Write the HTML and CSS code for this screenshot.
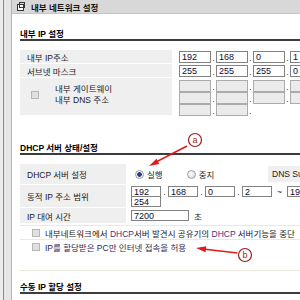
FILE: index.html
```html
<!DOCTYPE html>
<html lang="ko">
<head>
    <title>내부 네트워크 설정</title>
    <meta charset="utf-8">
    <link rel="stylesheet" href="styles.css">
</head>
<body>
    <div class="frame"><div class="frame-edge"></div></div>

    <div class="main">
        <div class="titlebar">
            <svg class="title-icon" width="8" height="9" viewBox="0 0 8 9">
                <rect x="0.5" y="2.5" width="6" height="6" fill="#fff" stroke="#333"/>
                <rect x="2.5" y="0.5" width="5" height="5" fill="none" stroke="#333"/>
            </svg>
            <span>내부 네트워크 설정</span>
        </div>

        <div class="content">
            <h2 class="section-title first">내부 IP 설정</h2>
            <div class="form-table lan-table">
                <div class="label">내부 IP주소</div>
                <div class="value">
                    <div class="ip-line">
                        <input class="octet" type="text" value="192"><span class="dot">.</span>
                        <input class="octet" type="text" value="168"><span class="dot">.</span>
                        <input class="octet" type="text" value="0"><span class="dot">.</span>
                        <input class="octet" type="text" value="1">
                    </div>
                </div>

                <div class="label">서브넷 마스크</div>
                <div class="value">
                    <div class="ip-line">
                        <input class="octet" type="text" value="255"><span class="dot">.</span>
                        <input class="octet" type="text" value="255"><span class="dot">.</span>
                        <input class="octet" type="text" value="255"><span class="dot">.</span>
                        <input class="octet" type="text" value="0">
                    </div>
                </div>

                <div class="label check-label">
                    <input class="chk" type="checkbox">
                    <span>내부 게이트웨이<br>내부 DNS 주소</span>
                </div>
                <div class="value stacked">
                    <div class="ip-line">
                        <input class="octet" type="text" disabled><span class="dot">.</span>
                        <input class="octet" type="text" disabled><span class="dot">.</span>
                        <input class="octet" type="text" disabled><span class="dot">.</span>
                        <input class="octet" type="text" disabled>
                    </div>
                    <div class="ip-line">
                        <input class="octet" type="text" disabled><span class="dot">.</span>
                        <input class="octet" type="text" disabled><span class="dot">.</span>
                        <input class="octet" type="text" disabled><span class="dot">.</span>
                        <input class="octet" type="text" disabled>
                    </div>
                    <div class="ip-line">
                        <input class="octet" type="text" disabled><span class="dot">.</span>
                        <input class="octet" type="text" disabled><span class="dot">.</span>
                    </div>
                </div>
            </div>

            <h2 class="section-title second">DHCP 서버 상태/설정</h2>
            <div class="form-table dhcp-table">
                <div class="label">DHCP 서버 설정</div>
                <div class="value radio-cell">
                    <div class="radios">
                        <label class="radio-item"><input class="radio" type="radio" name="dhcp" checked> 실행</label>
                        <label class="radio-item"><input class="radio" type="radio" name="dhcp"> 중지</label>
                    </div>
                    <div class="side-label">DNS Su</div>
                </div>

                <div class="label">동적 IP 주소 범위</div>
                <div class="value range-cell">
                    <div class="ip-line">
                        <input class="octet small" type="text" value="192"><span class="dot wide">.</span>
                        <input class="octet small" type="text" value="168"><span class="dot wide">.</span>
                        <input class="octet small" type="text" value="0"><span class="dot wide">.</span>
                        <input class="octet small" type="text" value="2"><span class="tilde">~</span>
                        <input class="octet small" type="text" value="192">
                    </div>
                    <div class="ip-line next">
                        <input class="octet small" type="text" value="254">
                    </div>
                </div>

                <div class="label">IP 대여 시간</div>
                <div class="value lease-cell">
                    <input class="octet lease" type="text" value="7200"><span class="unit">초</span>
                </div>
            </div>

            <div class="check-list">
                <div class="check-row">
                    <input class="chk" type="checkbox">
                    <span>내부네트워크에서 <span class="hl">DHCP</span>서버 발견시 공유기의 <span class="hl">DHCP</span> 서버기능을 중단</span>
                </div>
                <div class="check-row purple">
                    <input class="chk" type="checkbox">
                    <span>IP를 할당받은 PC만 인터넷 접속을 허용</span>
                </div>
            </div>

            <h2 class="section-title third">수동 IP 할당 설정</h2>
        </div>
    </div>

    <svg class="notes" width="300" height="300" viewBox="0 0 300 300">
        <line x1="187" y1="146" x2="157" y2="161.5" stroke="#e01b1b" stroke-width="1.5"/>
        <polygon points="149,166 156.5,158.7 159.3,164" fill="#e01b1b"/>
        <circle cx="195" cy="140" r="6.5" fill="#fff" stroke="#9a1c1c" stroke-width="1.2"/>
        <text x="195" y="143" text-anchor="middle" class="note-text">a</text>

        <line x1="237.5" y1="253" x2="205" y2="249.2" stroke="#e01b1b" stroke-width="1.5"/>
        <polygon points="196,248 206.3,246.2 205.6,252.2" fill="#e01b1b"/>
        <circle cx="245" cy="255" r="6.5" fill="#fff" stroke="#9a1c1c" stroke-width="1.2"/>
        <text x="245" y="258" text-anchor="middle" class="note-text">b</text>
    </svg>
</body>
</html>
```

FILE: styles.css
```css
* {
    box-sizing: border-box;
}

body {
    margin: 0;
    width: 300px;
    height: 300px;
    overflow: hidden;
    position: relative;
    display: flex;
    background-color: white;
    font-family: "Liberation Sans", "Noto Sans CJK KR", sans-serif;
    font-size: 8.5px;
    color: #1a1a1a;
}

.frame {
    flex: none;
    width: 12px;
    padding-left: 3px;
    background-color: #ececec;
}

.frame-edge {
    height: 100%;
    border-left: 1px solid #8a8a8a;
    border-right: 1px solid #b4b4b4;
    background-color: #e6e6e6;
}

.main {
    flex: 1;
    min-width: 0;
}

.titlebar {
    height: 14px;
    display: flex;
    align-items: center;
    gap: 6px;
    padding-left: 5px;
    background-color: #d8d8d8;
    border-bottom: 1px solid #c4c4c4;
    font-weight: bold;
    color: #111;
    white-space: nowrap;
}

.title-icon {
    flex: none;
}

.content {
    padding-left: 8px;
}

.section-title {
    margin: 0;
    height: 11px;
    line-height: 9px;
    font-size: 8.5px;
    font-weight: bold;
    color: #000;
    border-bottom: 2px solid #3c3c3c;
    white-space: nowrap;
}

.section-title.first {
    margin-top: 16px;
}

.section-title.second {
    margin-top: 29px;
}

.section-title.third {
    margin-top: 12px;
}

.form-table {
    display: grid;
    row-gap: 1px;
    margin-top: 9px;
    white-space: nowrap;
}

.lan-table {
    grid-template-columns: 152px 1fr;
    grid-template-rows: 13px 13px 37px;
}

.dhcp-table {
    grid-template-columns: 106px 1fr;
    grid-template-rows: 20px 22px 15px;
}

.label {
    display: flex;
    align-items: center;
    padding-left: 7px;
    background-color: #efefef;
}

.check-label {
    padding-left: 11px;
    padding-bottom: 4px;
    gap: 16px;
    line-height: 11px;
}

.value {
    display: flex;
    flex-direction: column;
    padding-left: 7px;
    padding-top: 1px;
}

.value.stacked {
    padding-top: 2px;
}

.ip-line {
    display: flex;
    align-items: flex-end;
}

.octet {
    flex: none;
    width: 32px;
    height: 12px;
    margin: 0;
    padding: 0 2px;
    border: 1px solid #828282;
    background-color: white;
    font-family: "Liberation Sans", "Noto Sans CJK KR", sans-serif;
    font-size: 9px;
    color: #0c0c30;
    outline: none;
}

.octet:disabled {
    background-color: #ebebeb;
    border-color: #ababab;
}

.octet.small {
    width: 30px;
    height: 11px;
}

.dot {
    width: 5px;
    text-align: center;
    line-height: 9px;
    color: #333;
}

.dot.wide {
    width: 7px;
}

.tilde {
    width: 15px;
    text-align: center;
    line-height: 10px;
    color: #222;
}

.range-cell {
    padding-left: 5px;
}

.ip-line.next {
    margin-top: -1px;
}

.radio-cell {
    flex-direction: row;
    align-items: center;
    padding-left: 9px;
    padding-top: 0;
}

.radios {
    width: 133px;
    display: flex;
    gap: 24px;
}

.radio-item {
    display: flex;
    align-items: center;
    gap: 3px;
}

.radio {
    appearance: none;
    margin: 0;
    width: 9px;
    height: 9px;
    border-radius: 50%;
    border: 1px solid #a0a0a0;
    background: radial-gradient(circle at 40% 40%, #ffffff, #cfcfcf);
}

.radio:checked {
    background: radial-gradient(circle, #24408a 0 2px, #ffffff 2.6px, #d4d4d4 100%);
}

.side-label {
    height: 16px;
    display: flex;
    align-items: center;
    padding-left: 4px;
    flex: 1;
    background-color: #efefef;
    overflow: hidden;
}

.lease-cell {
    flex-direction: row;
    align-items: center;
    padding-left: 5px;
    padding-top: 0;
}

.octet.lease {
    width: 58px;
    height: 11px;
}

.unit {
    margin-left: 5px;
}

.check-list {
    margin-top: 2px;
    padding-bottom: 16px;
    border-top: 1px solid #ece8de;
    border-bottom: 1px solid #ece8de;
    white-space: nowrap;
}

.check-row {
    height: 14px;
    display: flex;
    align-items: center;
    gap: 5px;
    padding-left: 12px;
}

.check-row:first-child {
    border-bottom: 1px solid #ece8de;
}

.check-row .hl {
    color: #4b2f86;
}

.check-row.purple {
    color: #2c1f52;
}

.chk {
    appearance: none;
    flex: none;
    margin: 0;
    width: 8px;
    height: 8px;
    border: 1px solid #b6b6b6;
    background-color: #e0e0e0;
}

.notes {
    position: absolute;
    top: 0;
    left: 0;
    pointer-events: none;
}

.note-text {
    font-family: "Liberation Sans", sans-serif;
    font-size: 9px;
    fill: #9a1c1c;
}
```
